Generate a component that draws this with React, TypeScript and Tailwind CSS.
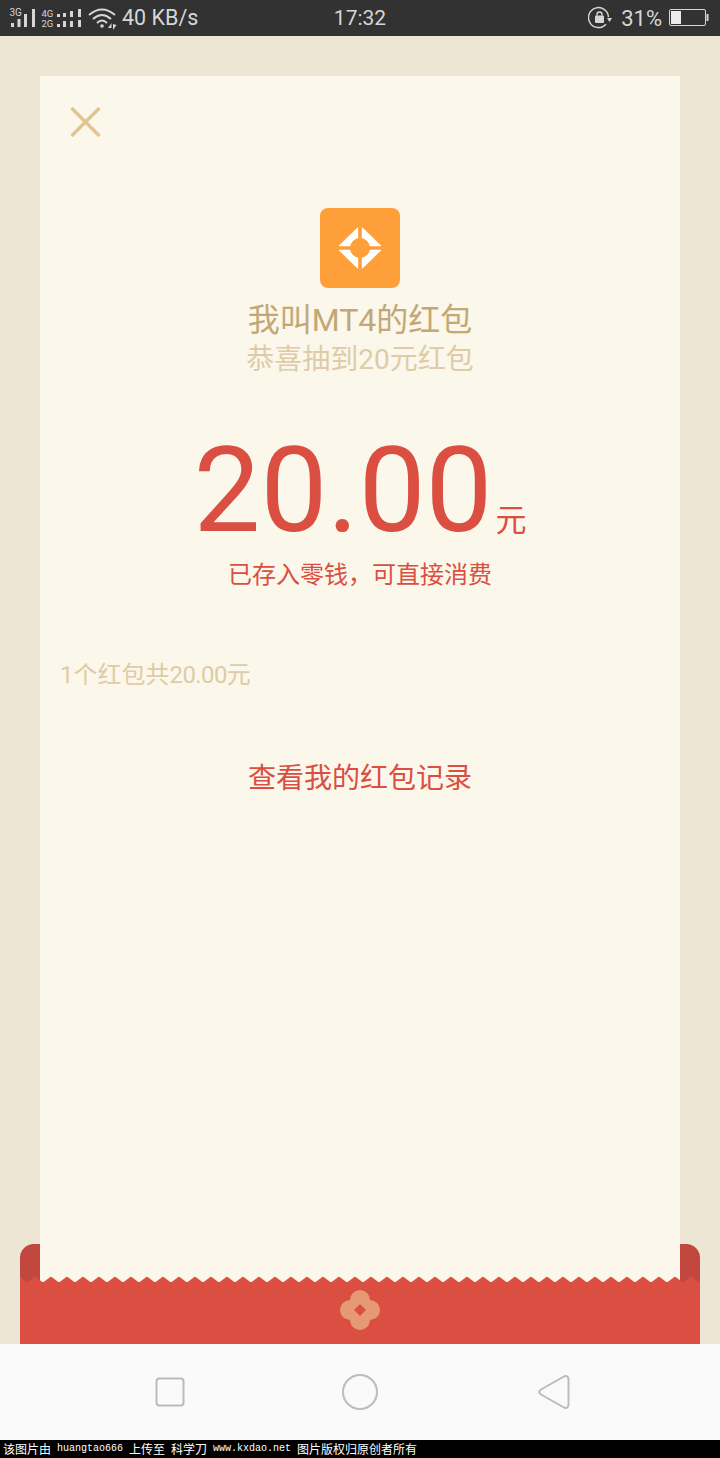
const CJK = 'font-["Roboto","Noto_Sans_CJK_SC",sans-serif]';

const zigzagPoints = () => {
  const pts: string[] = ['0,68', '0,1'];
  for (let x = 7; x <= 680; x += 16) {
    pts.push(`${x},6.5`, `${x + 8},0.5`);
  }
  pts.push('680,68');
  return pts.join(' ');
};

const StatusBar = () => (
  <div className="h-9 shrink-0 bg-[#323232] grid grid-cols-3 items-center text-[#d6d6d6] text-[21px] font-['Roboto',sans-serif]">
    <div className="flex items-center pl-[9px]">
      <svg width="79" height="36" viewBox="0 0 79 36" fill="#d6d6d6" className="shrink-0">
        <text x="0.5" y="16" fontSize="10" fontFamily="Roboto">3G</text>
        <rect x="2" y="23" width="3" height="4" />
        <rect x="8.5" y="19" width="3" height="8" />
        <rect x="15" y="14" width="3" height="13" />
        <rect x="23" y="9" width="3" height="18" />
        <text x="32.5" y="17" fontSize="9.5" fontFamily="Roboto">4G</text>
        <text x="32.5" y="27" fontSize="9.5" fontFamily="Roboto">2G</text>
        <rect x="48" y="14" width="3" height="3" />
        <rect x="48" y="24" width="3" height="3" />
        <rect x="54" y="13" width="3" height="4" />
        <rect x="54" y="21" width="3" height="6" />
        <rect x="61" y="11" width="3" height="6" />
        <rect x="61" y="21" width="3" height="6" />
        <rect x="69" y="9" width="3" height="8" />
        <rect x="69" y="20" width="3" height="7" />
      </svg>
      <svg width="30" height="36" viewBox="0 0 30 36" fill="none" stroke="#d6d6d6" strokeWidth="2" className="shrink-0">
        <path d="M1 15 Q14 4 27 15" />
        <path d="M5 19 Q14 11 23 19" />
        <path d="M9 23 Q14 18 19 23" />
        <circle cx="14" cy="26" r="1.8" fill="#d6d6d6" stroke="none" />
        <path d="M20 28 L23.5 23 V28 Z M25 24 V30 L28.5 25 Z" fill="#d6d6d6" stroke="none" />
      </svg>
      <span className="ml-[4px] pt-[1px] text-[21.5px] whitespace-nowrap">40 KB/s</span>
    </div>
    <div className="text-center pt-[2px]">17:32</div>
    <div className="flex items-center justify-end pr-[11px]">
      <svg width="24" height="24" viewBox="0 0 24 24" fill="none" className="shrink-0">
        <path d="M20.5 11 A10 10 0 1 0 18 18.2" stroke="#d6d6d6" strokeWidth="1.4" />
        <path d="M19 12 H24 L21.5 16 Z" fill="#d6d6d6" />
        <rect x="7" y="9.5" width="9" height="7.5" rx="1" fill="#d6d6d6" />
        <path d="M9 9.5 V8.5 A2.5 2.5 0 0 1 14 8.5 V9.5" stroke="#d6d6d6" strokeWidth="1.4" />
      </svg>
      <span className="ml-[9px] text-[22px]">31%</span>
      <svg width="40" height="20" viewBox="0 0 40 20" fill="none" className="ml-[7px]">
        <rect x="0.5" y="1.5" width="36" height="16" rx="1.5" stroke="#d6d6d6" />
        <rect x="2" y="3" width="10" height="13" fill="#ececec" />
        <rect x="37.5" y="6" width="2" height="7" fill="#d6d6d6" />
      </svg>
    </div>
  </div>
);

const RedPacketCard = () => (
  <div className={`mx-10 mt-10 h-[1206px] bg-[#fbf7eb] flex flex-col items-center ${CJK}`}>
    <div className="w-full pl-[30px] pt-[31px]">
      <svg width="32" height="30" viewBox="0 0 32 30" stroke="#e0c592" strokeWidth="3.4">
        <path d="M1.5 1 L29.5 29 M29.5 1 L1.5 29" />
      </svg>
    </div>
    <div className="mt-[71px] w-20 h-20 rounded-lg bg-[#ff9f3a] flex items-center justify-center">
      <svg width="44" height="44" viewBox="-22 -22 44 44">
        <path d="M-2.5 -20.5 L2.5 -20.5 L21 -2.5 L21 2.5 L2.5 20.5 L-2.5 20.5 L-21 2.5 L-21 -2.5 Z" fill="#fff" />
        <path d="M-23 0 H23 M0 -23 V23" stroke="#ff9f3a" strokeWidth="3.6" />
        <circle r="10" fill="#ff9f3a" />
      </svg>
    </div>
    <div className="mt-3 text-[32px] leading-10 text-[#c2a875]">我叫MT4的红包</div>
    <div className="mt-px text-[28px] leading-[38px] text-[#dfcba6]">恭喜抽到20元红包</div>
    <div className="mt-[52px] flex items-baseline text-[#db4e42]">
      <span className="text-[119px] leading-[120px]">20.00</span>
      <span className="text-[31px] ml-[3px]">元</span>
    </div>
    <div className="mt-[8px] text-2xl leading-8 text-[#db4e42]">已存入零钱，可直接消费</div>
    <div className="w-full mt-[68px] pl-5 text-2xl leading-8 text-[#dfcba6]">
      1个红包共<span className="tracking-[-0.6px]">20.00</span>元
    </div>
    <div className="mt-[68px] text-[28px] leading-10 text-[#db4e42]">查看我的红包记录</div>
  </div>
);

const Envelope = () => (
  <div className="relative -mt-[6px] mx-5 h-[68px]">
    <div className="absolute left-0 right-0 -top-[32px] h-10 rounded-t-[14px] bg-[#c2483f] -z-10" />
    <svg width="680" height="68" viewBox="0 0 680 68" className="block">
      <polygon points={zigzagPoints()} fill="#db4e42" />
      <g fill="#e59a75">
        <circle cx="340" cy="24" r="10" />
        <circle cx="340" cy="44" r="10" />
        <circle cx="330" cy="34" r="10" />
        <circle cx="350" cy="34" r="10" />
        <rect x="332" y="26" width="16" height="16" />
      </g>
      <polygon points="340,28 346,34 340,40 334,34" fill="#db4e42" />
    </svg>
  </div>
);

const NavBar = () => (
  <div className="h-24 shrink-0 bg-[#fafafa] flex items-center justify-center">
    <svg width="460" height="40" viewBox="0 0 460 40" fill="none" stroke="#bbbbbb" strokeWidth="2" strokeLinejoin="round">
      <rect x="26.5" y="6.5" width="27" height="27" rx="3" />
      <circle cx="230" cy="20" r="17" />
      <path d="M411 17.5 L434 4.5 Q438 3 438.5 7 V33 Q438 37 434 35.5 L411 22.5 Q407.5 20 411 17.5 Z" />
    </svg>
  </div>
);

const Watermark = () => (
  <div className="h-[18px] shrink-0 bg-black text-white flex items-center pl-[3px] text-xs leading-[18px] whitespace-nowrap font-['Noto_Sans_CJK_SC',sans-serif]">
    <span className="leading-[18px]">该图片由</span>
    <span className="ml-[6px] text-[10px] leading-[18px] font-['Liberation_Mono',monospace]">huangtao666</span>
    <span className="ml-[6px] leading-[18px]">上传至</span>
    <span className="ml-[6px] leading-[18px]">科学刀</span>
    <span className="ml-[6px] text-[10px] leading-[18px] font-['Liberation_Mono',monospace]">www.kxdao.net</span>
    <span className="ml-[6px] leading-[18px]">图片版权归原创者所有</span>
  </div>
);

export default function App() {
  return (
    <div className="w-[720px] h-[1458px] flex flex-col overflow-hidden">
      <StatusBar />
      <div className="relative z-0 flex-1 bg-[#ede6d4]">
        <RedPacketCard />
        <Envelope />
      </div>
      <NavBar />
      <Watermark />
    </div>
  );
}
